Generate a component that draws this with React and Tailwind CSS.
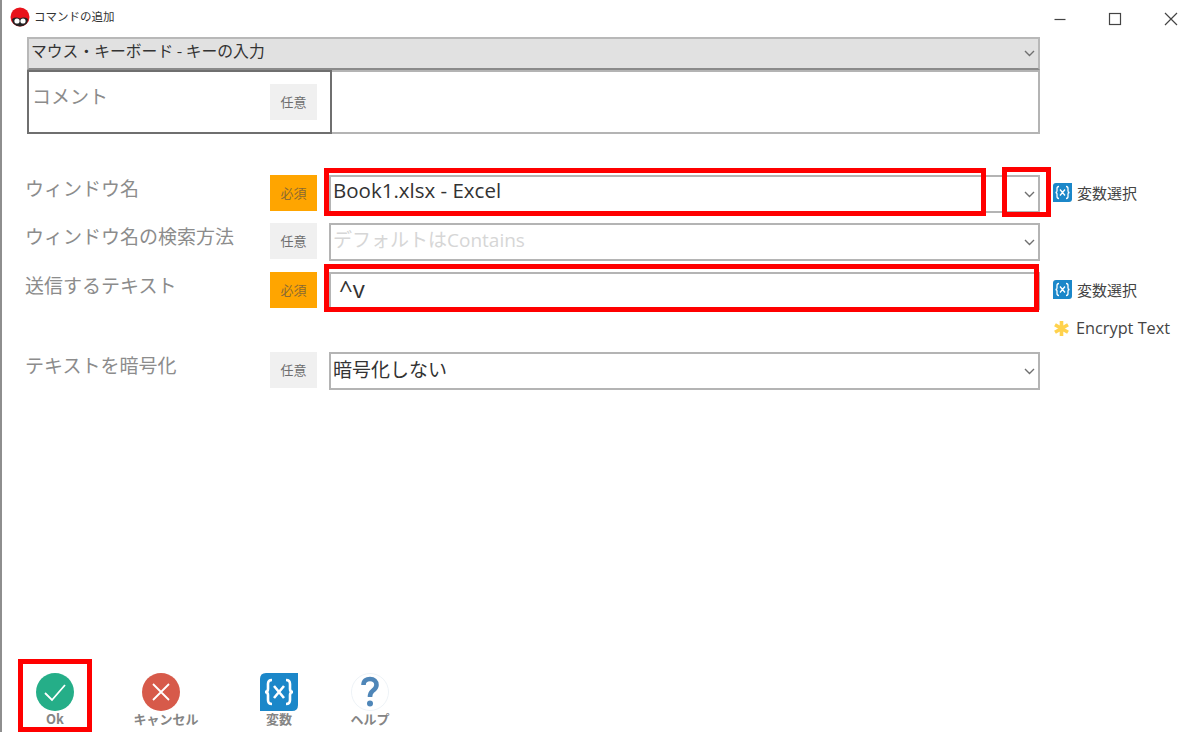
import React from "react";

const FONT = { fontFamily: '"Noto Sans CJK JP", "Open Sans", sans-serif' };

function Chevron({ className = "" }) {
  return (
    <svg width="11" height="7" viewBox="0 0 11 7" className={className}>
      <path d="M1 1 L5.5 5.5 L10 1" fill="none" stroke="#707070" strokeWidth="1.4" />
    </svg>
  );
}

function Badge({ required, label }) {
  return (
    <div className={`w-[47px] h-[36px] flex items-center justify-center text-[13px] shrink-0 ${required ? "bg-[#ffa500] text-[#8a6a32]" : "bg-[#f0f0f0] text-[#6e6e6e]"}`}>
      {label}
    </div>
  );
}

function VarIcon({ size = 19 }) {
  return (
    <svg width={size} height={size} viewBox="0 0 38 38" className="shrink-0">
      <path d="M6 0 H38 V32 Q38 38 32 38 H0 V6 Q0 0 6 0 Z" fill="#1b87c9" />
      <path d="M12 7 Q8 7 8 11 V16 Q8 19 5 19 Q8 19 8 22 V27 Q8 31 12 31 M26 7 Q30 7 30 11 V16 Q30 19 33 19 Q30 19 30 22 V27 Q30 31 26 31 M14 13 L24 25 M24 13 L14 25" fill="none" stroke="#fff" strokeWidth="2.6" />
    </svg>
  );
}

function VarLink() {
  return (
    <div className="flex items-center gap-[5px] text-[15px] leading-[19px] text-[#444] mt-[8px]">
      <VarIcon />
      <span>変数選択</span>
    </div>
  );
}

function Row({ label, required, className, children, side }) {
  return (
    <div className={`flex items-start ${className}`}>
      <div className="w-[268px] pl-[23px] mt-[3px] text-[19px] leading-none text-[#8c8c8c] shrink-0">{label}</div>
      <Badge required={required} label={required ? "必須" : "任意"} />
      <div className="ml-[12px] w-[711px] h-[38px] border-2 border-[#b4b4b4] bg-white flex items-center justify-between pl-[2px] pr-[3px] shrink-0">
        {children}
      </div>
      {side && <div className="ml-[13px]">{side}</div>}
    </div>
  );
}

function ToolButton({ icon, label, className = "", labelClass = "" }) {
  return (
    <div className={`flex flex-col items-center w-[70px] ${className}`}>
      <div className="h-[40px] flex items-center justify-center">{icon}</div>
      <div className={`text-[13px] font-bold leading-none text-[#858585] whitespace-nowrap ${labelClass}`}>{label}</div>
    </div>
  );
}

export default function App() {
  return (
    <div className="relative w-[1200px] h-[732px] bg-white overflow-hidden border-l-2 border-[#8e8e8e]" style={FONT}>
      <div className="h-[37px] flex items-center justify-between pl-[8px]">
        <div className="flex items-center gap-[4px] text-[11.5px] text-[#333] -mt-[3px]">
          <svg width="20" height="20" viewBox="0 0 20 20">
            <circle cx="10" cy="10" r="9.5" fill="#e8131b" />
            <path d="M2 12 Q2 19 10 19.5 Q18 19 18 12 Q14 9.5 10 11.5 Q6 9.5 2 12Z" fill="#222" />
            <circle cx="7" cy="14" r="2.6" fill="#fff" />
            <circle cx="13" cy="14" r="2.6" fill="#fff" />
          </svg>
          <span>コマンドの追加</span>
        </div>
        <div className="flex items-center text-[#333]">
          <svg width="14" height="14" viewBox="0 0 14 14" className="mr-[41px]"><path d="M1.5 7.5 H12.5" stroke="#444" strokeWidth="1.2" /></svg>
          <svg width="14" height="14" viewBox="0 0 14 14" className="mr-[42px]"><rect x="1.5" y="1.5" width="11" height="11" fill="none" stroke="#444" strokeWidth="1.2" /></svg>
          <svg width="14" height="14" viewBox="0 0 14 14" className="mr-[22px]"><path d="M1 1 L13 13 M13 1 L1 13" stroke="#444" strokeWidth="1.2" /></svg>
        </div>
      </div>

      <div className="ml-[25px] w-[1013px] h-[33px] bg-[#e1e1e1] border-2 border-[#b8b8b8] border-b-[#8a8a8a] flex items-center justify-between pl-[2px] pr-[3px] text-[15.8px] text-[#333]">
        <span className="-mt-[5px]">マウス・キーボード - キーの入力</span>
        <Chevron />
      </div>
      <div className="ml-[25px] w-[1013px] h-[64px] flex">
        <div className="w-[305px] border-2 border-[#6f6f6f] flex items-start shrink-0">
          <span className="ml-[3px] mt-[14px] text-[19px] leading-none text-[#8c8c8c]">コメント</span>
          <div className="ml-auto mr-[13px] mt-[12px] w-[47px] h-[36px] flex items-center justify-center bg-[#f0f0f0] text-[13px] text-[#6e6e6e]">任意</div>
        </div>
        <div className="flex-1 border-2 border-l-0 border-[#b4b4b4]" />
      </div>

      <Row label="ウィンドウ名" required className="mt-[41px]" side={<VarLink />}>
        <span className="text-[20.5px] text-[#333] -mt-[8px]" style={{ fontFamily: '"Open Sans", sans-serif' }}>Book1.xlsx - Excel</span>
        <Chevron />
      </Row>
      <Row label="ウィンドウ名の検索方法" className="mt-[10px]">
        <span className="text-[19px] text-[#d6d6d6] -mt-[4px]" style={{ fontFamily: '"Open Sans", "Noto Sans CJK JP", sans-serif' }}>デフォルトはContains</span>
        <Chevron />
      </Row>
      <Row label="送信するテキスト" required className="mt-[11px]" side={<VarLink />}>
        <span className="text-[24px] leading-none text-[#333] pl-[6px] -mt-[4px]" style={{ fontFamily: '"Open Sans", sans-serif' }}>^v</span>
      </Row>
      <div className="flex items-center gap-[6px] ml-[1051px] mt-[2px] h-[32px] text-[16.3px] text-[#444]" style={{ fontFamily: '"Open Sans", sans-serif' }}>
        <svg width="17" height="17" viewBox="0 0 17 17">
          <path d="M8.5 1 V16 M2 4.8 L15 12.2 M15 4.8 L2 12.2" stroke="#ffd24d" strokeWidth="3.6" />
        </svg>
        <span>Encrypt Text</span>
      </div>
      <Row label="テキストを暗号化" className="mt-[8px]">
        <span className="text-[19px] text-[#333] -mt-[4px]">暗号化しない</span>
        <Chevron />
      </Row>

      <div className="absolute left-[18px] top-[672px] flex">
        <ToolButton
          label="Ok"
          icon={
            <svg width="38" height="38" viewBox="0 0 38 38">
              <circle cx="19" cy="19" r="19" fill="#25ae88" />
              <path d="M9 20 L16 27 L29 12" fill="none" stroke="#fff" strokeWidth="1.8" />
            </svg>
          }
        />
        <ToolButton
          label="キャンセル"
          className="ml-[36px]"
          labelClass="ml-[10px]"
          icon={
            <svg width="38" height="38" viewBox="0 0 38 38">
              <circle cx="19" cy="19" r="19" fill="#d75a4a" />
              <path d="M11 11 L27 27 M27 11 L11 27" fill="none" stroke="#fff" strokeWidth="1.8" />
            </svg>
          }
        />
        <ToolButton label="変数" className="ml-[48px]" icon={<VarIcon size={38} />} />
        <ToolButton
          label="ヘルプ"
          className="ml-[21px]"
          icon={
            <svg width="38" height="38" viewBox="0 0 38 38">
              <circle cx="19" cy="19" r="18.5" fill="#fff" stroke="#eef3f7" />
              <path d="M12.5 12 C12.5 7.5 15.5 6 19 6 C23 6 25.5 8.5 25.5 12 C25.5 15 23.5 16.5 21.5 18 C19.5 19.5 19 21 19 24" fill="none" stroke="#4f86b8" strokeWidth="4.6" />
              <circle cx="19" cy="30.5" r="3" fill="#4f86b8" />
            </svg>
          }
        />
      </div>

      {/* red annotation frames */}
      <div className="absolute left-[322px] top-[168px] w-[662px] h-[48px] border-[5px] border-[#ff0000]" />
      <div className="absolute left-[1000px] top-[167px] w-[49px] h-[50px] border-[5px] border-[#ff0000]" />
      <div className="absolute left-[322px] top-[264px] w-[715px] h-[48px] border-[5px] border-[#ff0000]" />
      <div className="absolute left-[16px] top-[659px] w-[74px] h-[73px] border-[5px] border-[#ff0000]" />
    </div>
  );
}
